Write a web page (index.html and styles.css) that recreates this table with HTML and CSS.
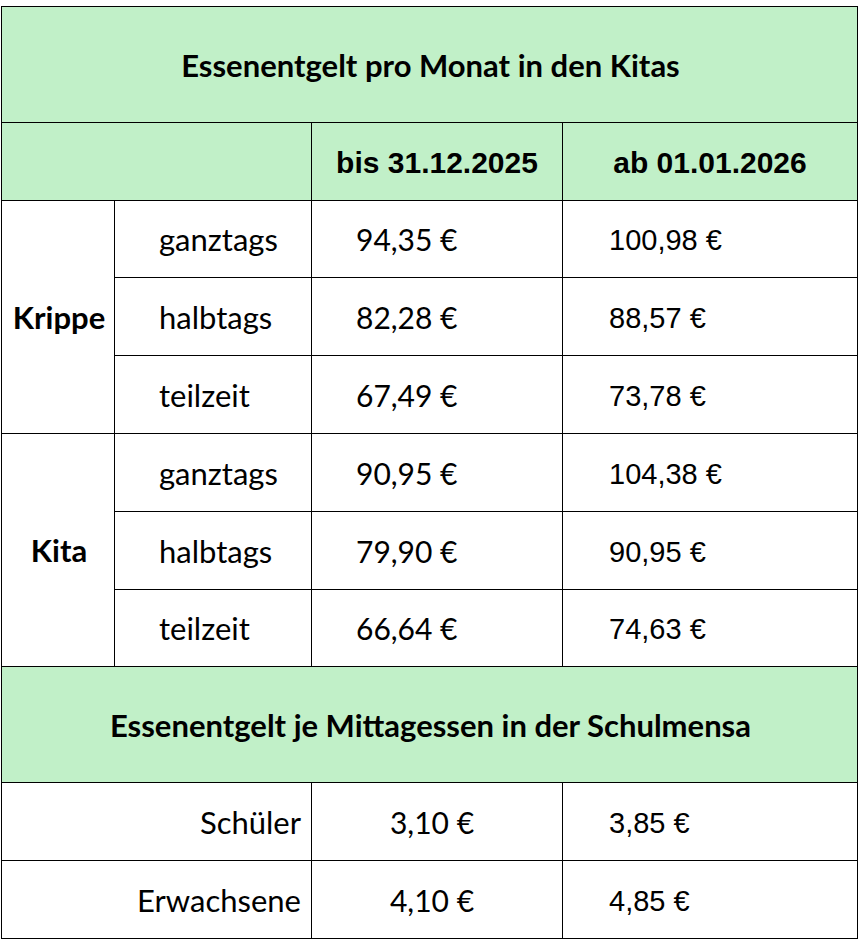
FILE: index.html
```html
<!DOCTYPE html>
<html lang="de">
<head>
<meta charset="utf-8">
<title>Essenentgelt</title>
<link rel="stylesheet" href="styles.css">
</head>
<body>
<div class="sheet">
  <div class="cell head title span4">Essenentgelt pro Monat in den Kitas</div>

  <div class="cell head span2"></div>
  <div class="cell head date">bis 31.12.2025</div>
  <div class="cell head date">ab 01.01.2026</div>

  <div class="cell group rows3">Krippe</div>
  <div class="cell label">ganztags</div>
  <div class="cell val">94,35 €</div>
  <div class="cell val2">100,98 €</div>
  <div class="cell label">halbtags</div>
  <div class="cell val">82,28 €</div>
  <div class="cell val2">88,57 €</div>
  <div class="cell label">teilzeit</div>
  <div class="cell val">67,49 €</div>
  <div class="cell val2">73,78 €</div>

  <div class="cell group rows3">Kita</div>
  <div class="cell label">ganztags</div>
  <div class="cell val">90,95 €</div>
  <div class="cell val2">104,38 €</div>
  <div class="cell label">halbtags</div>
  <div class="cell val">79,90 €</div>
  <div class="cell val2">90,95 €</div>
  <div class="cell label">teilzeit</div>
  <div class="cell val">66,64 €</div>
  <div class="cell val2">74,63 €</div>

  <div class="cell head title span4">Essenentgelt je Mittagessen in der Schulmensa</div>

  <div class="cell who span2">Schüler</div>
  <div class="cell price">3,10 €</div>
  <div class="cell val2">3,85 €</div>
  <div class="cell who span2">Erwachsene</div>
  <div class="cell price">4,10 €</div>
  <div class="cell val2">4,85 €</div>
</div>
</body>
</html>
```

FILE: styles.css
```css
html, body {
  margin: 0;
  padding: 0;
  background: #ffffff;
}

body {
  padding: 6px 0 0 1px;
}

.sheet {
  display: grid;
  grid-template-columns: 112px 196px 250px 294px;
  grid-template-rows: 115px 77px 76px 77px 77px 77px 77px 76px 115px 77px 77px;
  gap: 1px;
  padding: 1px;
  background: #000000;
  width: max-content;
  font-family: "Lato", "Noto Sans", sans-serif;
  font-size: 31px;
  color: #000000;
}

.cell {
  background: #ffffff;
  display: flex;
  align-items: center;
  white-space: nowrap;
}

.head {
  background: #c1f0c8;
}

.span4 { grid-column: span 4; }
.span2 { grid-column: span 2; }
.rows3 { grid-row: span 3; }

.title {
  justify-content: center;
  font-weight: 700;
  padding-left: 2px;
}

.date {
  justify-content: center;
  font-family: "Liberation Sans", Arial, sans-serif;
  font-size: 30px;
  font-weight: 700;
  padding-top: 2px;
}

.group {
  justify-content: center;
  font-weight: 700;
  padding-left: 2px;
}

.label {
  padding-left: 44px;
}

.val {
  padding-left: 44px;
  font-size: 30px;
}

.val2 {
  padding-left: 46px;
  padding-top: 3px;
  font-family: "Liberation Sans", Arial, sans-serif;
  font-size: 29px;
}

.who {
  justify-content: flex-end;
  padding-right: 10px;
}

.price {
  justify-content: center;
  padding-right: 10px;
  font-size: 30px;
}
```
